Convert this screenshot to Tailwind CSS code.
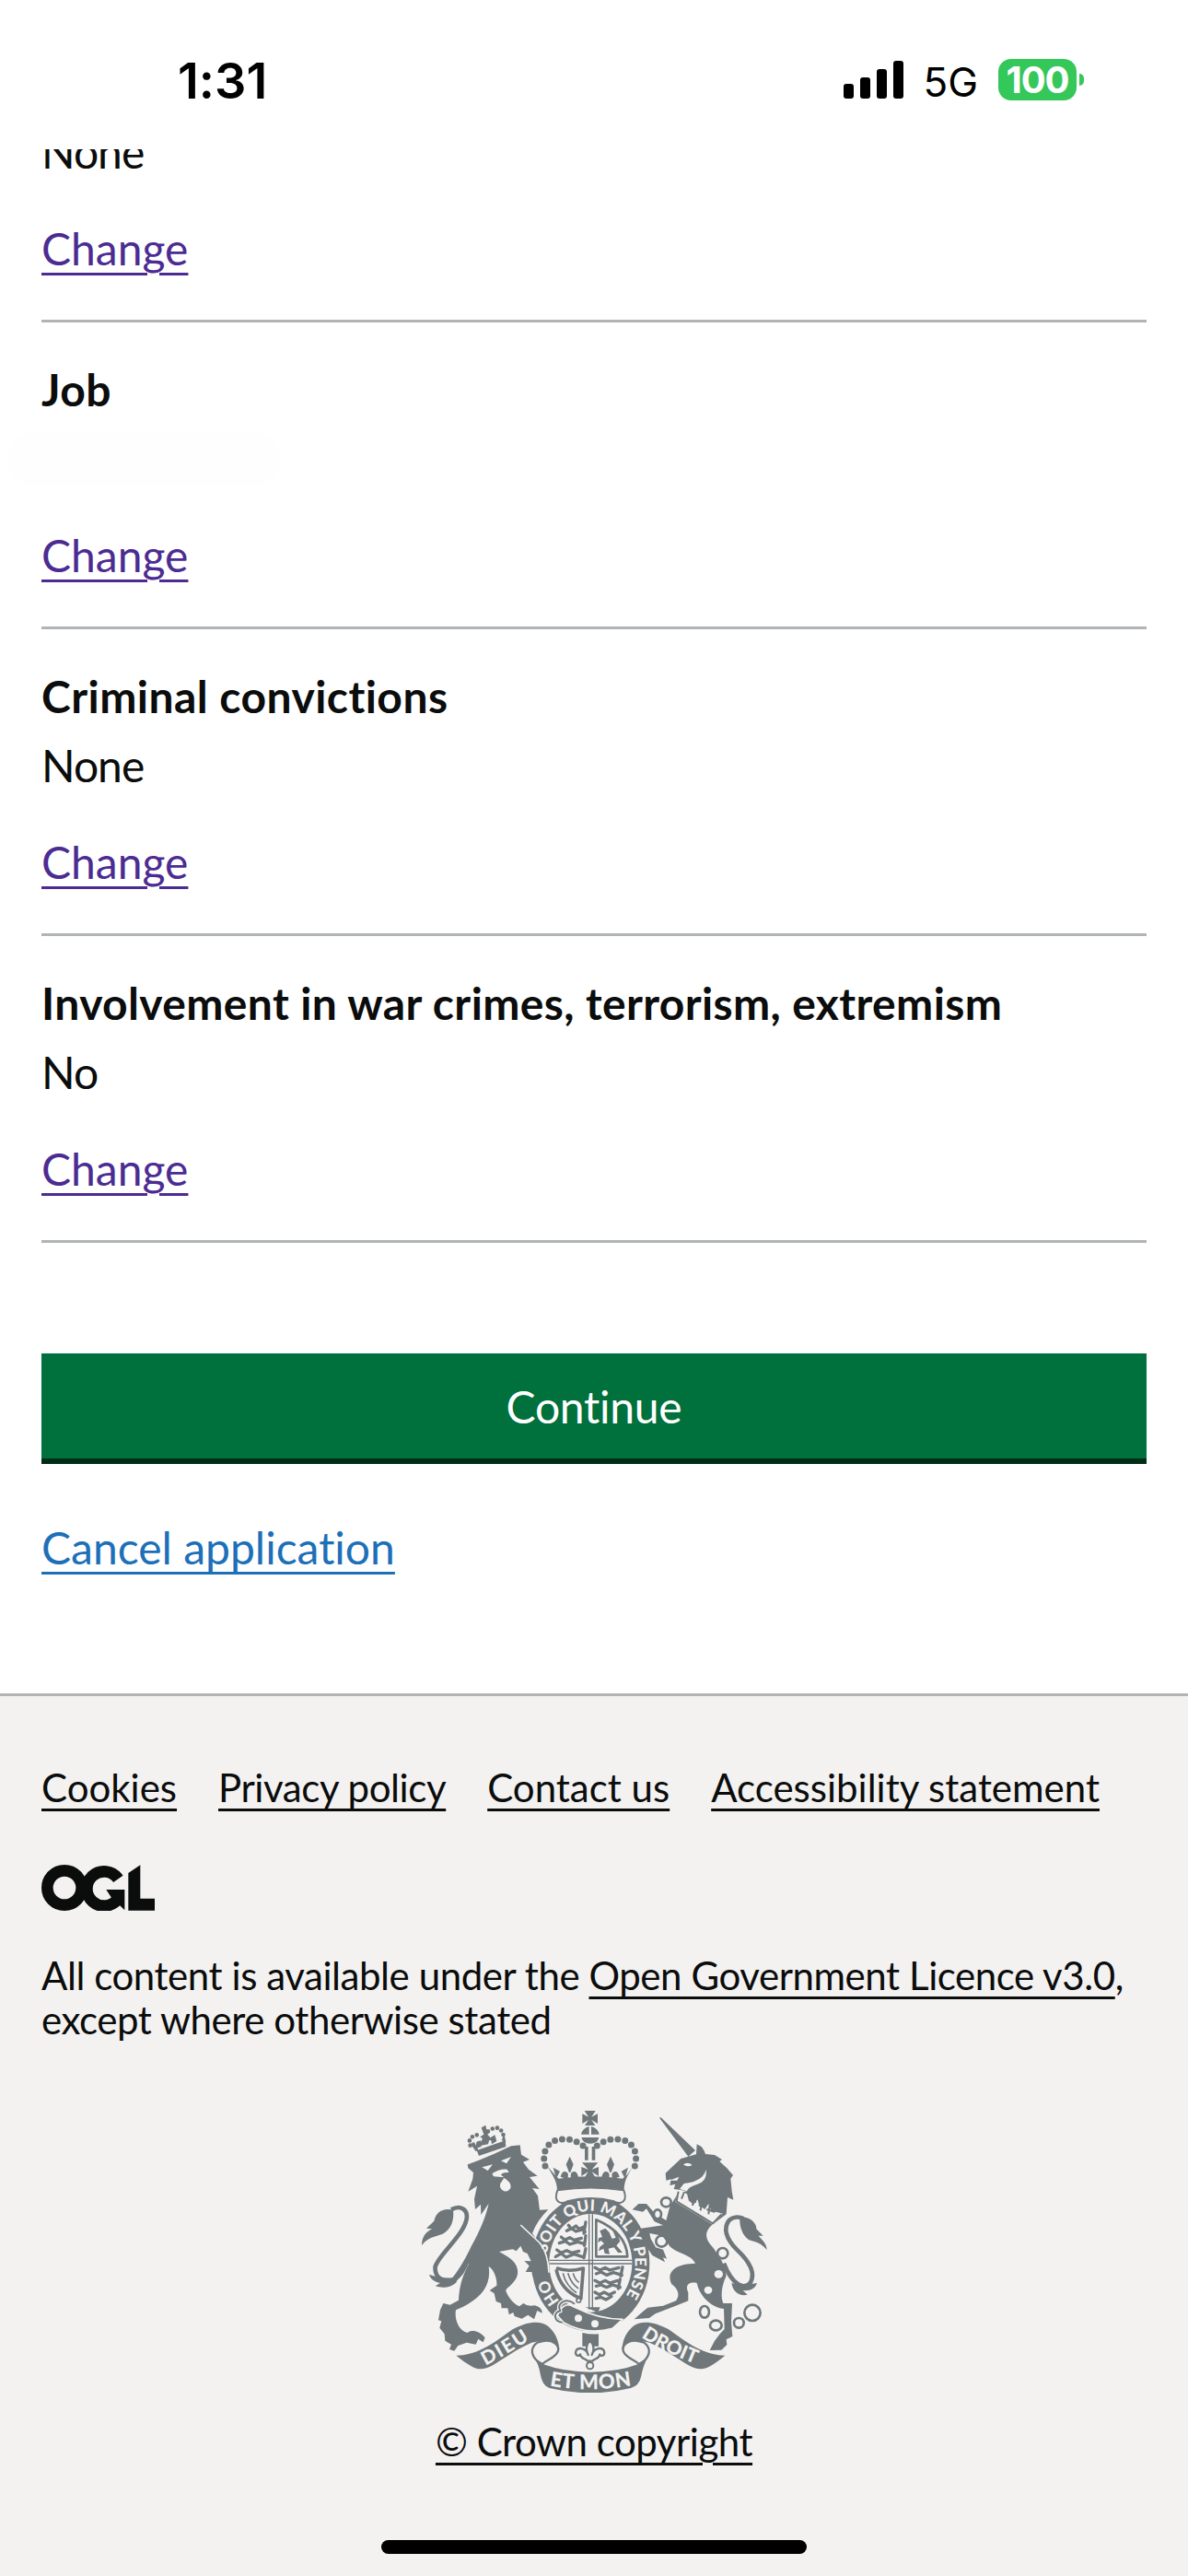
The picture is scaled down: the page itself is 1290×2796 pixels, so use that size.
<!DOCTYPE html>
<html lang="en">
<head>
    <meta charset="UTF-8">
    <meta name="viewport" content="width=device-width, initial-scale=1.0">
    <script src="https://cdn.jsdelivr.net/npm/@tailwindcss/browser@4"></script>
    <title>Check your answers</title>
</head>
<body class="bg-white font-['Lato','Liberation_Sans',sans-serif] text-[48px] leading-[60px] text-[#0b0c0c] [font-variant-ligatures:none]">
<div class="flex flex-col w-[1290px] h-[2796px] overflow-hidden">

    <!-- Status bar -->
    <header class="flex justify-between items-start shrink-0 h-[162px] pl-[193px] pr-[113px] pt-[57px] text-black font-['Inter',sans-serif]">
        <span class="text-[54px] font-semibold mt-px">1:31</span>
        <div class="flex items-start">
            <svg class="w-[65px] h-[41px] mt-[9px] mr-[21px]" viewBox="0 0 65 41">
                <rect x="0" y="25" width="11" height="16" rx="3"/>
                <rect x="18" y="18" width="11" height="23" rx="3"/>
                <rect x="36" y="9" width="11" height="32" rx="3"/>
                <rect x="54" y="0" width="11" height="41" rx="3"/>
            </svg>
            <span class="text-[44px] mr-[22px] mt-[2px]">5G</span>
            <div class="flex items-center mt-[7px]">
                <div class="flex items-center justify-center w-[85px] h-[45px] rounded-[14px] bg-[#34c759] text-white text-[40px] font-bold tracking-[-1px]">100</div>
                <div class="w-[5px] h-[13px] ml-[3px] rounded-r-full bg-[#34c759]"></div>
            </div>
        </div>
    </header>

    <main class="flex flex-col shrink-0 h-[1676px] overflow-hidden px-[45px]">
        <div class="-mt-[27px] pb-[47px] border-b-3 border-[#b1b4b6]">
            <p class="tracking-[-1px]">None</p>
            <a class="inline-block mt-[45px] underline decoration-3 underline-offset-8 text-[#4c2c92]">Change</a>
        </div>
        <div class="pt-[43px] pb-[47px] border-b-3 border-[#b1b4b6]">
            <h2 class="font-bold tracking-[0.4px]">Job</h2>
            <p class="w-[297px] h-[60px] mt-[15px] -ml-[37px] rounded-full bg-[#fefefe]"></p>
            <a class="inline-block mt-[45px] underline decoration-3 underline-offset-8 text-[#4c2c92]">Change</a>
        </div>
        <div class="pt-[43px] pb-[47px] border-b-3 border-[#b1b4b6]">
            <h2 class="font-bold tracking-[0.45px]">Criminal convictions</h2>
            <p class="mt-[15px] tracking-[-1px]">None</p>
            <a class="inline-block mt-[45px] underline decoration-3 underline-offset-8 text-[#4c2c92]">Change</a>
        </div>
        <div class="pt-[43px] pb-[47px] border-b-3 border-[#b1b4b6]">
            <h2 class="font-bold whitespace-nowrap tracking-[0.37px]">Involvement in war crimes, terrorism, extremism</h2>
            <p class="mt-[15px] tracking-[-1px]">No</p>
            <a class="inline-block mt-[45px] underline decoration-3 underline-offset-8 text-[#4c2c92]">Change</a>
        </div>
        <button class="shrink-0 h-[120px] mt-[120px] pt-[2px] border-b-6 border-[#002d18] bg-[#00703c] text-white tracking-[-0.25px]">Continue</button>
        <a class="w-max mt-[61px] underline decoration-3 underline-offset-8 text-[#1d70b8]">Cancel application</a>
    </main>

    <footer class="relative flex flex-col grow px-[45px] border-t-3 border-[#b1b4b6] bg-[#f3f2f1] text-[42px] leading-[48px]">
        <nav class="flex gap-[45px] mt-[75px] whitespace-nowrap">
            <a class="underline decoration-3 underline-offset-7">Cookies</a>
            <a class="underline decoration-3 underline-offset-7 tracking-[-0.4px]">Privacy policy</a>
            <a class="underline decoration-3 underline-offset-7">Contact us</a>
            <a class="underline decoration-3 underline-offset-7">Accessibility statement</a>
        </nav>

        <!-- Open Government Licence logo -->
        <svg class="w-[123px] h-[50px] mt-[60px]" viewBox="0 0 369 150" fill="#0b0c0c">
            <g fill="none" stroke="#0b0c0c" stroke-width="38">
                <circle cx="75" cy="75" r="56"/>
                <path d="M250 46A56 56 0 1 0 250 110"/>
            </g>
            <path d="M211 81H271V148L254 131L226 104Z"/>
            <path d="M283 27L322 1V110H369V149H283Z"/>
        </svg>

        <p class="mt-[46px] whitespace-nowrap tracking-[-0.43px]">All content is available under the <a class="underline decoration-3 underline-offset-7">Open Government Licence v3.0</a>,<br>except where otherwise stated</p>

        <!-- Royal coat of arms -->
        <svg class="w-[375px] h-[306px] mt-[75px] ml-[413px]" viewBox="54 63 1125 918" fill="#6f777b" stroke-linejoin="round">
            <defs>
                <path id="motto" d="M304 701A145 171 0 0 1 304 359A145 171 0 0 1 304 701"/>
                <path id="dieu" d="M262 893Q345 850 440 785"/>
                <path id="mon" d="M470 958Q604 984 760 953"/>
                <path id="droit" d="M168 800Q240 850 385 903"/>
            </defs>

            <!-- Crown, garter and shield -->
            <g transform="translate(300 30)">
                <ellipse cx="304" cy="530" rx="192" ry="221"/>
                <ellipse cx="304" cy="529" rx="135" ry="160" fill="#f3f2f1"/>
                <g fill="none" stroke="#6f777b" stroke-width="4">
                    <path d="M170 520H438M170 531H438M299 370V680M310 370V680"/>
                    <path d="M322 388V508H424Q420 430 322 388Z" stroke-width="8"/>
                </g>

                <!-- England, twice -->
                <g fill="none" stroke="#6f777b" stroke-width="10" stroke-linecap="round">
                    <path d="M232 406l10 12l14-10l10 10l20-8M226 424l16-8l14 10l22-6l8 8M288 396l-6 36"/>
                    <path d="M208 444l12 10l16-8l14 8l24-6M202 464l20-6l14 10l26-8l20 6M288 440l-4 32"/>
                    <path d="M194 486l14 10l18-8l16 8l24-6M190 508l18-10l16 12l26-10l26 8M288 482l-6 30"/>
                    <path d="M318 544l16 8l18-8l14 8l30-8M322 564l16-6l18 10l22-8l28 8M408 542l-6 30"/>
                    <path d="M318 586l16 8l18-8l14 8l26-8M322 604l16-4l18 8l20-8l24 8M400 582l-6 30"/>
                    <path d="M318 624l14 8l16-8l16 8l18-8M322 644l14-4l18 8l18-10"/>
                </g>
                <!-- Scotland -->
                <path d="M334 424l18-8l12 12l10 22l12-4l-10-22l16 10l8 24l-12 14l20 22l-14 2l-14-18l-18 4l4 18l-16-2l-4-16l-16 8l4-14l14-10l-10-10l-10 6l2-14l12-4z"/>
                <!-- Ireland -->
                <path d="M192 545Q230 560 280 546L272 648M192 550Q206 615 266 642" fill="none" stroke="#6f777b" stroke-width="11"/>
                <path d="M214 562Q222 600 258 626M230 562Q240 596 264 612M247 562Q252 582 266 592" fill="none" stroke="#6f777b" stroke-width="5"/>
                <circle cx="265" cy="650" r="7" fill="none" stroke="#6f777b" stroke-width="5"/>

                <g fill="#f3f2f1" font-family="Lato" font-weight="900" font-size="51">
                    <text><textPath href="#motto" startOffset="116">HO</textPath></text>
                    <text letter-spacing="1"><textPath href="#motto" startOffset="282">SOIT QUI MAL Y PENSE</textPath></text>
                </g>

                <!-- Belt end and buckle -->
                <path d="M196 700Q215 650 250 672Q330 712 408 712L375 742Q290 765 215 722Z" stroke="#f3f2f1" stroke-width="5"/>
                <path d="M287 673H335L328 690Z"/>
                <circle cx="264" cy="709" r="12" fill="#f3f2f1"/>
                <circle cx="318" cy="727" r="12" fill="#f3f2f1"/>
                <path d="M252 662C225 640 190 660 205 685C180 690 185 720 212 722" fill="none" stroke="#f3f2f1" stroke-width="14"/>
                <path d="M252 662C225 640 190 660 205 685C180 690 185 720 212 722" fill="none" stroke="#6f777b" stroke-width="6"/>

                <!-- Crown -->
                <path d="M196 292C182 330 205 340 228 328Q304 308 380 328C403 340 426 330 412 292Q304 275 196 292Z" fill="#f3f2f1" stroke="#6f777b" stroke-width="6"/>
                <path d="M163 214L186 240L200 254Q304 240 408 254L424 240L443 214C422 246 414 262 413 290Q304 274 195 290C194 262 182 246 163 214Z"/>
                <path d="M182 218l22 12l-12 24zM426 218l-22 12l12 24z"/>
                <path d="M236 182l12 26l-10 26h-4l-10-26zM369 182l12 26l-10 26h-4l-10-26z"/>
                <path d="M206 248q6-24 22-14q6 8 0 22zM264 248q-6-24-22-14q-6 8 0 22zM340 248q6-24 22-14q6 8 0 22zM398 248q-6-24-22-14q-6 8 0 22z"/>
                <path d="M276 202h52l-20 22l22-8v30l-22-14l14 22h-40l14-22l-22 14v-30l22 8z"/>
                <path d="M285 150h11v44h-11zM308 150h11v44h-11zM274 120h57q-4 20-28 20t-29-20zM299 84v26h-26q4-20 26-26zM306 84v26h26q-4-20-26-26z"/>
                <path d="M284 33h36l-13 20l20-10v32l-20-12l12 18h-34l12-18l-20 12v-32l20 10z"/>
                <g fill="none" stroke="#6f777b" stroke-width="21" stroke-linecap="round" stroke-dasharray="0 24.2">
                    <path d="M156 213C146 180 156 145 184 132C215 120 250 124 280 148"/>
                    <path d="M448 213C458 180 448 145 420 132C389 120 354 124 324 148"/>
                </g>

                <!-- Pendant fleur-de-lis -->
                <path d="M277 756Q304 762 330 760V800H277Z"/>
                <path d="M302 780C285 800 290 815 296 828C290 806 258 798 255 820C256 834 268 832 270 826C272 842 290 840 294 848H310C314 840 332 842 334 826C336 832 348 834 349 820C346 798 314 806 308 828C314 815 319 800 302 780Z" fill="#f3f2f1" stroke="#6f777b" stroke-width="7"/>
                <circle cx="302" cy="863" r="11" fill="#f3f2f1" stroke="#6f777b" stroke-width="6"/>
            </g>

            <!-- Lion -->
            <path d="M203 238L240 224L290 203L345 178L374 175L378 206L405 222L384 230L402 254L431 275L405 279L437 318L414 315L432 340L438 386L466 385Q430 420 414 462L440 500L462 545L468 585L460 600L448 588L440 604L430 590L415 603L412 588L392 588L404 568L388 552L410 553L398 528L384 522L376 503L362 520L350 514L306 522C345 542 376 565 364 603C352 632 326 640 328 650C335 668 350 690 372 700L385 690Q400 702 422 697Q446 702 446 722L430 714L420 742L400 728L380 740L356 732L352 720L338 727L334 706L314 706L312 690L296 684L290 658L275 648L298 632C300 605 286 578 272 570C282 640 240 680 165 712C160 740 172 778 202 786C216 776 240 778 260 802L254 817L238 806L230 824L200 818L172 828L160 845L144 840L150 824L130 812L128 790L112 770L118 748L108 745L114 712L124 690L146 695L174 680C178 620 190 600 208 555C190 590 180 605 160 625L150 612Q185 570 215 505C245 450 262 410 272 365L247 402L246 368L228 384L225 350L234 308L205 326L220 285L222 264L205 250Z"/>
            <path d="M250 247L285 238L269 258ZM312 226L345 213L330 235ZM283 268Q305 252 332 254L338 264Q316 262 312 272L322 280L288 277ZM322 282Q345 295 344 312Q338 328 322 325Q305 316 310 300Z" fill="#f3f2f1"/>
            <path d="M376 435L440 495Q466 530 468 590M205 560L180 610" fill="none" stroke="#f3f2f1" stroke-width="5"/>
            <path d="M150 385C180 368 205 385 200 415C190 470 110 530 98 570C94 610 130 625 160 612C180 600 195 575 205 545" fill="none" stroke="#6f777b" stroke-width="14"/>
            <path d="M156 386C120 378 100 395 94 422L69 446L88 448C66 458 54 475 54 502C72 474 98 474 122 464C152 448 160 415 156 386ZM78 596L108 606L160 608L168 620C150 640 120 642 98 634L114 624C95 620 82 610 78 596Z"/>
            <path d="M233 192L326 160L328 180L240 210ZM214 172l10-8l14 26l-8 6zM322 138l6 26l-14-4zM240 178l12-24l-8-6l12-8l-8-22l14-8l4 18l10 4l-8 8l20 22l-14-4l-4 14z"/>
            <path d="M282 172l-4-22l14-8l6 20zM230 186l2-22l14-4l2 20z"/>
            <g fill="none" stroke="#6f777b" stroke-width="14" stroke-linecap="round" stroke-dasharray="0 16">
                <path d="M212 176Q200 145 245 140"/>
                <path d="M270 130Q310 100 322 150"/>
            </g>

            <!-- Unicorn -->
            <g transform="translate(600 0)">
                <path d="M228 86L233 85L345 192L322 212ZM350 172Q372 180 378 204L408 207L432 222L424 228L448 250L468 273L460 284L464 325L469 353L450 345L446 400L400 434C370 460 380 485 402 508C425 540 440 560 446 600C428 640 428 670 436 690H465L462 750L466 798L446 808L448 825L430 842L392 843L408 812L425 790L440 774L438 708C400 705 360 670 350 624C320 618 312 635 322 655V682L285 697L215 724L195 738L146 742L175 716L190 704L240 698L282 682C298 660 285 640 268 628C250 590 275 562 345 560C330 530 285 528 262 505L238 470L196 462L200 480L216 508L240 515L252 545L240 541L246 556L205 534L182 500L164 465L168 446L240 436L212 424L186 382L174 392L140 385L160 366L186 366L214 398L250 420L262 375L290 330L318 325L292 320L275 318L280 302L262 306L266 286L250 290L248 266L298 219L348 205Z"/>
                <path d="M306 238Q320 228 335 240Q318 248 306 238ZM380 255Q385 292 352 302Q320 312 318 325L294 318L308 300Q340 298 362 282Q376 272 380 255ZM260 290L292 278L286 290Z" fill="#f3f2f1"/>
                <path d="M290 322L280 360L402 434L434 398L412 392Q400 400 396 386L388 366L376 384L358 372L352 352L340 368L324 356L318 334Z" fill="#f3f2f1"/>
                <path d="M290 326L284 358L402 430L430 400M300 350l8-20M336 372l4-26M332 358l16 2M362 388l4-32M356 370l18 6M388 400l4-32M382 384l18 6" fill="none" stroke="#6f777b" stroke-width="6"/>
                <g fill="none" stroke="#6f777b" stroke-width="8">
                    <ellipse cx="250" cy="361" rx="16" ry="15"/>
                    <ellipse cx="222" cy="400" rx="12" ry="15" fill="#f3f2f1"/>
                    <circle cx="235" cy="488" r="18"/>
                    <circle cx="434" cy="527" r="17"/>
                    <ellipse cx="375" cy="718" rx="15" ry="19"/>
                    <ellipse cx="412" cy="762" rx="19" ry="16"/>
                    <circle cx="487" cy="754" r="16"/>
                    <circle cx="531" cy="721" r="26"/>
                </g>
                <ellipse cx="421" cy="595" rx="14" ry="13" fill="#f3f2f1"/>
                <ellipse cx="387" cy="647" rx="13" ry="12" fill="#f3f2f1"/>
                <path d="M438 560C465 630 505 650 525 622C545 585 512 545 480 515C445 480 435 445 455 420C470 406 490 408 502 414" fill="none" stroke="#6f777b" stroke-width="14"/>
                <path d="M490 410C522 405 545 428 544 448L566 470L550 470C566 485 578 498 578 516C560 494 540 490 520 484C498 468 488 440 490 410ZM463 624L500 633L546 624C540 645 520 650 500 648L515 662C490 668 468 655 463 624Z"/>
            </g>

            <!-- Motto scroll -->
            <g id="scroll">
                <path d="M166 860C240 860 300 810 350 775C400 748 440 746 465 764C490 785 500 812 502 840L482 818Q450 808 412 818C370 835 320 870 285 892C262 906 240 906 225 900Q200 888 166 860Z"/>
                <path d="M445 814C480 806 502 825 498 845C490 870 455 875 448 888C415 875 400 840 430 818Z" fill="#f3f2f1" stroke="#6f777b" stroke-width="7"/>
            </g>
            <use href="#scroll" transform="translate(1208 0) scale(-1 1)"/>
            <path d="M415 860Q425 882 448 888Q520 914 604 914Q690 914 760 888Q783 882 793 860Q775 890 768 930Q762 958 735 966Q670 982 604 982Q535 982 470 966Q446 958 440 920Q435 885 415 860Z"/>
            <g fill="#f3f2f1" font-family="Lato" font-weight="900">
                <text font-size="62" letter-spacing="6"><textPath href="#dieu">DIEU</textPath></text>
                <text font-size="66" letter-spacing="2"><textPath href="#mon">ET MON</textPath></text>
                <text font-size="63" transform="translate(600 0)"><textPath href="#droit">DROIT</textPath></text>
            </g>
        </svg>

        <a class="self-center mt-[29px] underline decoration-3 underline-offset-7 tracking-[-0.48px]">© Crown copyright</a>
        <div class="absolute bottom-[24px] left-[414px] w-[462px] h-[15px] rounded-full bg-black"></div>
    </footer>
</div>
</body>
</html>
